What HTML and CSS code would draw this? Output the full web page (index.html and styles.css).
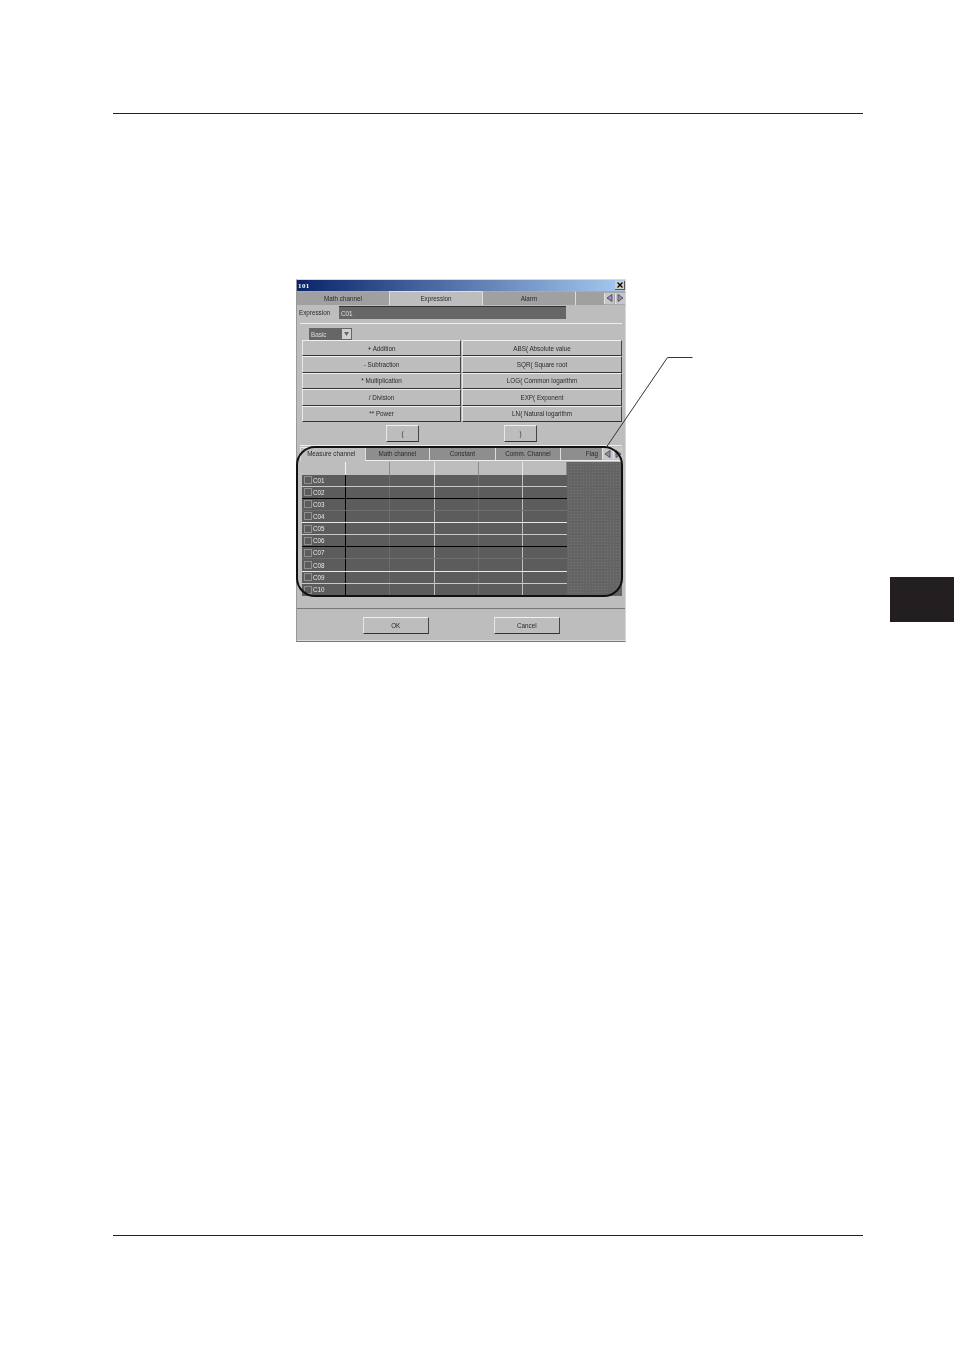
FILE: index.html
```html
<!DOCTYPE html>
<html lang="en">
<head>
<meta charset="utf-8">
<title>Expression dialog</title>
<link rel="stylesheet" href="styles.css">
</head>
<body>
<div class="page">
  <div class="rule rule-top"></div>
  <div class="dialog">
    <div class="titlebar">
      <span class="title">101</span>
      <span class="close"><svg width="6" height="6" viewBox="0 0 6 6"><path d="M.5 .5L5.500 5.500M5.500 .5L.5 5.500" stroke="#000" stroke-width="1.300"/></svg></span>
    </div>
    <div class="tabs top-tabs">
      <div class="tab t-a">Math channel</div>
      <div class="tab t-b active">Expression</div>
      <div class="tab t-c">Alarm</div>
      <div class="tab t-d"></div>
      <div class="arrows">
        <span class="arrow"><svg width="7" height="8" viewBox="0 0 7 8"><path d="M6 .5V7.500L1 4Z" fill="#8c8cc4" stroke="#444" stroke-width=".8"/></svg></span>
        <span class="arrow"><svg width="7" height="8" viewBox="0 0 7 8"><path d="M1 .5V7.500L6 4Z" fill="#8c8cc4" stroke="#444" stroke-width=".8"/></svg></span>
      </div>
    </div>
    <div class="expr-row">
      <span class="expr-label">Expression</span>
      <span class="expr-field">C01</span>
    </div>
    <div class="panel">
      <div class="select"><span class="select-text">Basic</span><span class="select-btn"><svg width="5" height="4" viewBox="0 0 5 4"><path d="M0 0H5L2.500 4Z" fill="#666"/></svg></span></div>
      <div class="ops">
        <button class="btn">+ Addition</button><button class="btn">ABS( Absolute value</button>
        <button class="btn">- Subtraction</button><button class="btn">SQR( Square root</button>
        <button class="btn">* Multiplication</button><button class="btn">LOG( Common logarithm</button>
        <button class="btn">/ Division</button><button class="btn">EXP( Exponent</button>
        <button class="btn">** Power</button><button class="btn">LN( Natural logarithm</button>
      </div>
      <div class="parens">
        <button class="btn paren">(</button>
        <button class="btn paren">)</button>
      </div>
    </div>
    <div class="tabs low-tabs">
      <div class="tab l-a active">Measure channel</div>
      <div class="tab l-b">Math channel</div>
      <div class="tab l-c">Constant</div>
      <div class="tab l-d">Comm. Channel</div>
      <div class="tab l-e">Flag</div>
      <div class="arrows low-arrows">
        <span class="arrow"><svg width="7" height="8" viewBox="0 0 7 8"><path d="M6 .5V7.500L1 4Z" fill="#8c8cc4" stroke="#444" stroke-width=".8"/></svg></span>
        <span class="arrow"><svg width="7" height="8" viewBox="0 0 7 8"><path d="M1 .5V7.500L6 4Z" fill="#8c8cc4" stroke="#444" stroke-width=".8"/></svg></span>
      </div>
    </div>
    <div class="grid-wrap">
      <div class="grid">
        <div class="head"></div><div class="head"></div><div class="head"></div><div class="head"></div><div class="head"></div><div class="head"></div>
        <div class="r"><div class="c ch"><i></i>C01</div><div class="c"></div><div class="c"></div><div class="c"></div><div class="c"></div><div class="c"></div></div>
        <div class="r"><div class="c ch"><i></i>C02</div><div class="c"></div><div class="c"></div><div class="c"></div><div class="c"></div><div class="c"></div></div>
        <div class="r"><div class="c ch"><i></i>C03</div><div class="c"></div><div class="c"></div><div class="c"></div><div class="c"></div><div class="c"></div></div>
        <div class="r"><div class="c ch"><i></i>C04</div><div class="c"></div><div class="c"></div><div class="c"></div><div class="c"></div><div class="c"></div></div>
        <div class="r"><div class="c ch"><i></i>C05</div><div class="c"></div><div class="c"></div><div class="c"></div><div class="c"></div><div class="c"></div></div>
        <div class="r"><div class="c ch"><i></i>C06</div><div class="c"></div><div class="c"></div><div class="c"></div><div class="c"></div><div class="c"></div></div>
        <div class="r"><div class="c ch"><i></i>C07</div><div class="c"></div><div class="c"></div><div class="c"></div><div class="c"></div><div class="c"></div></div>
        <div class="r"><div class="c ch"><i></i>C08</div><div class="c"></div><div class="c"></div><div class="c"></div><div class="c"></div><div class="c"></div></div>
        <div class="r"><div class="c ch"><i></i>C09</div><div class="c"></div><div class="c"></div><div class="c"></div><div class="c"></div><div class="c"></div></div>
        <div class="r"><div class="c ch"><i></i>C10</div><div class="c"></div><div class="c"></div><div class="c"></div><div class="c"></div><div class="c"></div></div>
      </div>
      <div class="grid-empty"></div>
    </div>
    <div class="footer">
      <button class="btn wide">OK</button>
      <button class="btn wide">Cancel</button>
    </div>
  </div>
  <div class="rule rule-bottom"></div>
  <div class="side-tab"></div>
  <div class="callout-box"></div>
  <svg class="callout-line" width="954" height="1350" viewBox="0 0 954 1350"><path d="M606.500 447L667.500 357.500H692.500" fill="none" stroke="#333" stroke-width="1"/></svg>
</div>
</body>
</html>
```

FILE: styles.css
```css
* { box-sizing: border-box; }
html, body { margin: 0; background: #fff; }
.page {
  position: relative;
  width: 954px;
  height: 1350px;
  padding-top: 113px;
  overflow: hidden;
  font-family: "Liberation Sans", Arial, sans-serif;
}
.rule { height: 1px; background: #222; margin-left: 113px; width: 750px; }
.rule-bottom { margin-top: 593px; }

.dialog {
  width: 330px;
  height: 363px;
  margin: 165px 0 0 296px;
  background: #bdbdbd;
  border: 1px solid #d8d8d8;
  border-bottom-color: #777;
  border-left-color: #999;
  color: #2a2a2a;
  font-size: 6.3px;
  filter: blur(.35px);
}
.titlebar {
  height: 11px;
  display: flex;
  align-items: center;
  justify-content: space-between;
  padding: 0 0 0 1px;
  background: linear-gradient(90deg, #0a246a, #a6caf0);
}
.title { color: #fff; font: bold 7px "Liberation Serif", serif; letter-spacing: .4px; }
.close {
  width: 10px; height: 9px;
  background: #d4d0c8;
  border-right: 1px solid #555;
  border-bottom: 1px solid #555;
  display: flex; align-items: center; justify-content: center;
}
.tabs { display: flex; position: relative; }
.top-tabs { height: 14px; background: #a0a0a0; }
.tab {
  display: flex; align-items: center; justify-content: center;
  background: #999;
  border-left: 1px solid #ddd;
  border-top: 1px solid #aaa;
  height: 100%;
}
.tab.active { background: #bdbdbd; border-top-color: #ddd; }
.t-a { width: 92px; border-left: 0; background: #a0a0a0; }
.t-b { width: 93px; }
.t-c { width: 93px; background: #a0a0a0; }
.t-d { width: 29px; background: #a0a0a0; }
.arrows {
  flex: 1;
  display: flex; align-items: center; justify-content: center; gap: 1px;
  background: #a8a8a8;
}
.arrow {
  width: 10px; height: 11px;
  display: flex; align-items: center; justify-content: center;
  background: #c6c6c6;
  border-left: 1px solid #e4e4e4;
}
.expr-row {
  height: 15px;
  display: flex;
  align-items: center;
  padding-left: 2px;
}
.expr-label { width: 40px; }
.expr-field {
  width: 227px; height: 13px;
  display: flex; align-items: center;
  padding-left: 2px;
  background: #666;
  border-top: 1px solid #333;
  color: #e0e0e0;
}
.panel {
  margin: 3px 3px 0 3px;
  border-top: 1px solid #eee;
  border-bottom: 1px solid #eee;
  height: 123px;
  padding: 4px 0 0 2px;
}
.select {
  display: flex;
  width: 43px; height: 12px;
  margin-left: 7px;
  background: #666;
  color: #ddd;
  align-items: center;
  justify-content: space-between;
}
.select-text { padding-left: 2px; }
.select-btn {
  width: 9px; height: 10px; margin-right: 1px;
  background: #d0d0d0;
  display: flex; align-items: center; justify-content: center;
}
.ops {
  display: grid;
  grid-template-columns: 159px 160px;
  gap: 0 1px;
  grid-auto-rows: 16.400px;
}
.btn {
  font: inherit;
  color: #2a2a2a;
  padding: 0;
  margin: 0;
  background: #bdbdbd;
  border: 1px solid #bdbdbd;
  border-top-color: #f0f0f0;
  border-left-color: #e8e8e8;
  border-right-color: #444;
  border-bottom-color: #333;
}
.parens { display: flex; gap: 85px; margin: 3px 0 0 84px; }
.paren { width: 33px; height: 17px; }
.low-tabs { height: 14px; margin: 1px 0 0 3px; width: 323px; border-bottom: 1px solid #eee; }
.low-tabs .tab { background: #8e8e8e; height: 13px; padding-bottom: 2px; }
.low-tabs .tab.active { background: #bdbdbd; height: 14px; position: relative; border-top-color: #eee; padding-right: 3px; padding-bottom: 3px; }
.l-a { width: 65px; }
.l-b { width: 65px; }
.l-c { width: 66px; }
.l-d { width: 66px; }
.l-e { width: 42px; justify-content: flex-end !important; padding-right: 4px; }
.low-arrows { height: 13px; background: #c4c4c4; }
.grid-wrap {
  display: flex;
  margin: 1px 0 0 5px;
  width: 320px;
  height: 134px;
}
.grid {
  width: 265px;
  height: 134px;
  display: grid;
  grid-template-columns: 44px 44px 45px 44px 44px 44px;
  grid-template-rows: 12.500px repeat(10, 12.150px);
  background: #5c5c5c;
}
.r { display: grid; grid-template-columns: 44px 44px 45px 44px 44px 44px; grid-column: 1 / -1; border-bottom: 1px solid #c8c8c8; }
.r:nth-child(4n + 8) { border-bottom-color: #000; }
.r:nth-child(4n + 9) { border-bottom-color: #6e6e6e; }
.r:nth-child(4n + 10) { border-bottom-color: #e8e8e8; }
.r:last-child { border-bottom: 0; }
.head { background: #bdbdbd; border-right: 1px solid #8c8c8c; }
.head:first-child { border-right: 1px solid #f4f4f4; }
.head:nth-child(3), .head:nth-child(5) { border-right-color: #e8e8e8; }
.c { border-right: 1px solid #6e6e6e; }
.c.ch {
  border-right-color: #000;
  display: flex; align-items: center; gap: 1px;
  padding-left: 2px;
  color: #e6e6e6;
}
.c:nth-child(3), .c:nth-child(5) { border-right-color: #c0c0c0; }
.c:last-child { border-right: 0; }
.c i { width: 8px; height: 8px; border: 1px solid #8f8f8f; }
.grid-empty {
  flex: 1;
  background-color: #646464;
  background-image: radial-gradient(#757575 30%, transparent 40%);
  background-size: 3px 3px;
}
.footer {
  margin-top: 12px;
  border-top: 1px solid #777;
  border-bottom: 1px solid #ddd;
  height: 33px;
  padding: 8px 0 0 66px;
  display: flex;
  gap: 65.500px;
}
.wide { width: 65.500px; height: 16.500px; }

.side-tab {
  position: absolute;
  left: 890px; top: 577px;
  width: 64px; height: 45px;
  background: #231f20;
}
.callout-box {
  position: absolute;
  left: 296px; top: 446px;
  width: 327px; height: 151px;
  border: 2px solid #111;
  border-radius: 19px;
}
.callout-line { position: absolute; left: 0; top: 0; pointer-events: none; }
```
